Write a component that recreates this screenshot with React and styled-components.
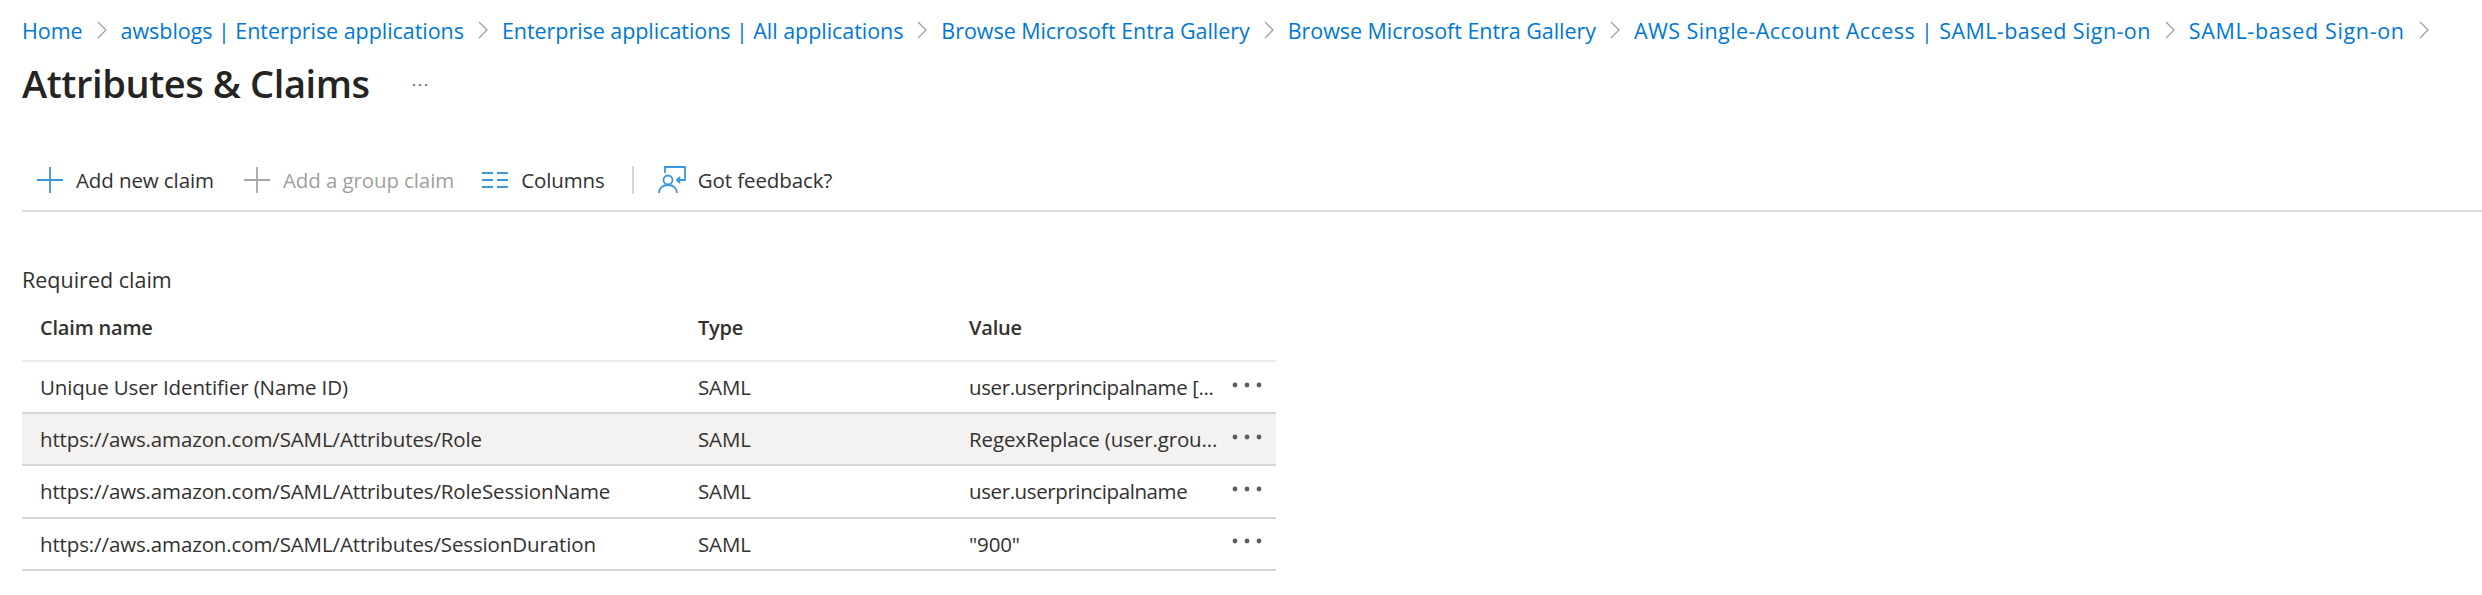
import { Fragment } from "react"
import styled, { createGlobalStyle } from "styled-components"

const GlobalStyle = createGlobalStyle`
    html, body {
        margin: 0;
        background-color: #fff;
        font-family: "Open Sans", "Noto Sans", sans-serif;
        color: #323130;
    }
`;

const Page = styled.div`
    padding: 15px 0 0 22px;
`;

const Breadcrumbs = styled.nav`
    display: flex;
    align-items: center;
    height: 30px;
    gap: 14px;
`;

const Crumb = styled.a`
    font-size: 21.5px;
    letter-spacing: ${(p) => p.$spacing}px;
    color: #0078d4;
    white-space: nowrap;
`;

const Chevron = styled.svg`
    width: 10px;
    height: 18px;
    fill: none;
    stroke: #a19f9d;
    stroke-width: 1.3;
`;

const TitleRow = styled.div`
    display: flex;
    align-items: center;
    height: 48px;
    margin-top: 14px;
`;

const Title = styled.h1`
    margin: 0;
    font-size: 38px;
    font-weight: 600;
    letter-spacing: -0.4px;
    color: #252423;
    white-space: nowrap;
`;

const TitleMore = styled.span`
    margin: -8px 0 0 42px;
    font-size: 17px;
    letter-spacing: 1.5px;
    line-height: 1;
    color: #605e5c;
`;

const Toolbar = styled.div`
    display: flex;
    align-items: center;
    height: 60px;
    margin-top: 43px;
    padding-left: 14px;
    border-bottom: 2px solid #dcdcdc;
`;

const ToolButton = styled.div`
    display: flex;
    align-items: center;
    gap: 12px;
    margin-right: ${(p) => p.$space}px;
    font-size: 20.5px;
    letter-spacing: -0.1px;
    color: ${(p) => (p.$disabled ? "#a19f9d" : "#323130")};
    white-space: nowrap;
`;

const ToolIcon = styled.svg`
    width: 28px;
    height: 28px;
    fill: none;
    stroke: ${(p) => (p.$disabled ? "#a8a6a4" : "#3a96dd")};
    stroke-width: 1.8;
`;

const Divider = styled.div`
    width: 2px;
    height: 28px;
    margin-right: 24px;
    background-color: #d8d6d4;
`;

const SectionTitle = styled.h2`
    margin: 53px 0 0;
    height: 30px;
    line-height: 30px;
    font-size: 21.5px;
    font-weight: 400;
    color: #323130;
`;

const Table = styled.div`
    width: 1254px;
`;

const Row = styled.div`
    display: grid;
    grid-template-columns: 676px 271px 1fr;
    align-items: center;
    height: ${(p) => (p.$head ? 65 : 50.2)}px;
    border-bottom: 2px solid ${(p) => (p.$head ? "#edebe9" : "#d6d5d3")};
    background-color: ${(p) => (p.$active ? "#f3f2f1" : "transparent")};
    font-size: ${(p) => (p.$head ? 20 : 20.5)}px;
    font-weight: ${(p) => (p.$head ? 600 : 400)};
    letter-spacing: ${(p) => (p.$head ? -0.2 : -0.13)}px;
    white-space: nowrap;
`;

const NameCell = styled.div`
    padding-left: 18px;
`;

const ValueCell = styled.div`
    display: flex;
    align-items: center;
    justify-content: space-between;
    padding-right: 14px;
`;

const ValueText = styled.span`
    letter-spacing: ${(p) => (p.$tight ? -0.4 : -0.13)}px;
`;

const RowMenu = styled.svg`
    width: 30px;
    height: 8px;
    margin-top: -5px;
    fill: #5f5e5c;
`;

const claims = [
    { name: "Unique User Identifier (Name ID)", value: "user.userprincipalname [...", tight: true },
    { name: "https://aws.amazon.com/SAML/Attributes/Role", value: "RegexReplace (user.grou...", active: true },
    { name: "https://aws.amazon.com/SAML/Attributes/RoleSessionName", value: "user.userprincipalname", tight: true },
    { name: "https://aws.amazon.com/SAML/Attributes/SessionDuration", value: '"900"' },
];

const crumbs = [
    { label: "Home", spacing: -0.05 },
    { label: "awsblogs | Enterprise applications", spacing: -0.05 },
    { label: "Enterprise applications | All applications", spacing: -0.05 },
    { label: "Browse Microsoft Entra Gallery", spacing: -0.05 },
    { label: "Browse Microsoft Entra Gallery", spacing: -0.05 },
    { label: "AWS Single-Account Access | SAML-based Sign-on", spacing: 0.41 },
    { label: "SAML-based Sign-on", spacing: 0.65 },
];

function App() {
    return (
        <Page>
            <GlobalStyle />
            <Breadcrumbs>
                {crumbs.map((crumb, i) => (
                    <Fragment key={i}>
                        <Crumb $spacing={crumb.spacing}>{crumb.label}</Crumb>
                        <Chevron viewBox="0 0 10 18">
                            <path d="M1 1l8 8-8 8" />
                        </Chevron>
                    </Fragment>
                ))}
            </Breadcrumbs>
            <TitleRow>
                <Title>Attributes &amp; Claims</Title>
                <TitleMore>...</TitleMore>
            </TitleRow>
            <Toolbar>
                <ToolButton $space={29}>
                    <ToolIcon viewBox="0 0 28 28"><path d="M14 1v26M1 14h26" /></ToolIcon>
                    Add new claim
                </ToolButton>
                <ToolButton $disabled $space={27}>
                    <ToolIcon $disabled viewBox="0 0 28 28"><path d="M14 1v26M1 14h26" /></ToolIcon>
                    Add a group claim
                </ToolButton>
                <ToolButton $space={27}>
                    <ToolIcon viewBox="0 0 28 28"><path d="M1 7h11M1 14h11M1 21h11M16 7h11M16 14h11M16 21h11" /></ToolIcon>
                    Columns
                </ToolButton>
                <Divider />
                <ToolButton $space={0}>
                    <ToolIcon viewBox="0 0 28 28">
                        <path d="M7 7V1h20v13h-8M22 11l-3 3 3 3" />
                        <circle cx="10" cy="14" r="4.5" />
                        <path d="M1 27c0-5 4-8 9-8s9 3 9 8" />
                    </ToolIcon>
                    Got feedback?
                </ToolButton>
            </Toolbar>
            <SectionTitle>Required claim</SectionTitle>
            <Table>
                <Row $head>
                    <NameCell>Claim name</NameCell>
                    <div>Type</div>
                    <div>Value</div>
                </Row>
                {claims.map((claim) => (
                    <Row key={claim.name} $active={claim.active}>
                        <NameCell>{claim.name}</NameCell>
                        <div>SAML</div>
                        <ValueCell>
                            <ValueText $tight={claim.tight}>{claim.value}</ValueText>
                            <RowMenu viewBox="0 0 30 8">
                                <circle cx="3" cy="4" r="2.4" />
                                <circle cx="15" cy="4" r="2.4" />
                                <circle cx="27" cy="4" r="2.4" />
                            </RowMenu>
                        </ValueCell>
                    </Row>
                ))}
            </Table>
        </Page>
    );
}

export default App;
